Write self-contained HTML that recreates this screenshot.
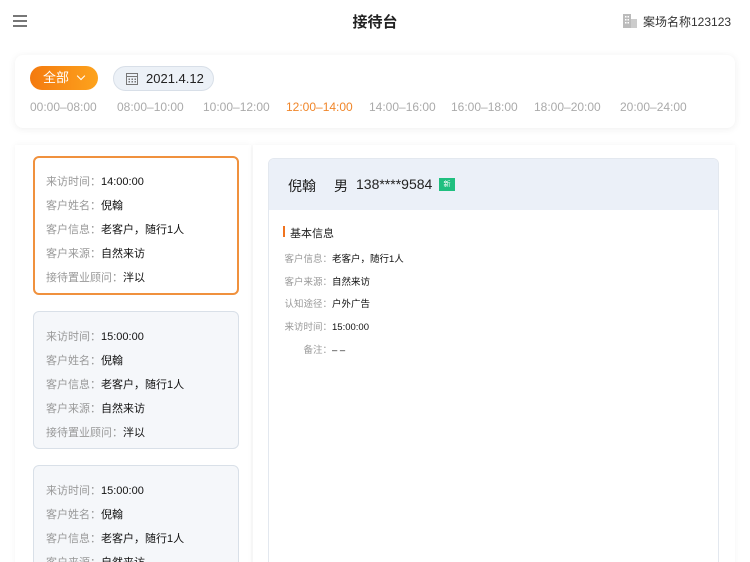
<!DOCTYPE html>
<html><head><meta charset="utf-8"><style>
*{margin:0;padding:0;box-sizing:border-box}
html,body{width:750px;height:562px;overflow:hidden}
body{background:#fff;font-family:"Liberation Sans","Noto Sans CJK SC",sans-serif;color:#333}
#w{position:relative;width:750px;height:562px;overflow:hidden}
.abs{position:absolute}
.filter{left:15px;top:55px;width:720px;height:73px;background:#fff;border-radius:8px;box-shadow:0 1px 8px rgba(0,0,0,0.07)}
.times span{position:absolute;top:100px;font-size:12px;color:#aaa;white-space:nowrap}
.card{position:absolute;left:33px;width:206px;border-radius:6px;padding:13px 0 0 12px;font-size:11px}
.card div{height:24px;line-height:24px;white-space:nowrap}
.card .l{color:#999}
.card .v{color:#111}
.rp{left:268px;top:158px;width:451px;height:420px;border:1px solid #e3e8ef;border-radius:6px;overflow:hidden}
.rh{height:51px;background:#ebf0f8;position:relative}
.info div{position:absolute;font-size:9.5px;white-space:nowrap}
.info .l{color:#999;text-align:right;width:48px;display:inline-block}
.info .v{color:#111}
</style></head><body><div id="w">
<div class="abs" style="left:13px;top:15px;width:14px">
<div style="height:1.5px;background:#777;margin-bottom:3.5px"></div><div style="height:1.5px;background:#777;margin-bottom:3.5px"></div><div style="height:1.5px;background:#777"></div></div>
<div class="abs" style="left:0;width:750px;top:11px;text-align:center;font-size:15px;font-weight:bold;color:#222">接待台</div>
<svg class="abs" style="left:623px;top:14px" width="14" height="14" viewBox="0 0 14 14"><rect x="0" y="0" width="8" height="14" fill="#bbb"/><rect x="8" y="5" width="6" height="9" fill="#ccc"/><g fill="#fff"><rect x="2" y="2" width="1.5" height="1.5"/><rect x="4.5" y="2" width="1.5" height="1.5"/><rect x="2" y="5" width="1.5" height="1.5"/><rect x="4.5" y="5" width="1.5" height="1.5"/><rect x="2" y="8" width="1.5" height="1.5"/><rect x="4.5" y="8" width="1.5" height="1.5"/></g></svg>
<div class="abs" style="left:643px;top:13px;font-size:12px;color:#333">案场名称123123</div>
<div class="abs filter"></div>
<div class="abs" style="left:30px;top:66px;width:68px;height:24px;border-radius:12px;background:linear-gradient(90deg,#f47a0f,#fda31d);color:#fff;font-size:13px;line-height:24px;padding-left:13px">全部 <span style="display:inline-block;width:6px;height:6px;border-right:1px solid #fff;border-bottom:1px solid #fff;transform:rotate(45deg);margin:0 0 3px 5px"></span></div>
<div class="abs" style="left:113px;top:66px;width:101px;height:25px;border-radius:13px;background:#ecf1f7;border:1px solid #d8dfe8;font-size:13px;line-height:23px;padding-left:32px;color:#222">2021.4.12</div>
<svg class="abs" style="left:126px;top:72px" width="12" height="13" viewBox="0 0 12 13"><rect x="0.5" y="1.5" width="11" height="11" fill="none" stroke="#777"/><line x1="0.5" y1="4.5" x2="11.5" y2="4.5" stroke="#777"/><g fill="#777"><rect x="2.5" y="6.5" width="1.5" height="1.5"/><rect x="5.5" y="6.5" width="1.5" height="1.5"/><rect x="8.5" y="6.5" width="1.5" height="1.5"/><rect x="2.5" y="9" width="1.5" height="1.5"/><rect x="5.5" y="9" width="1.5" height="1.5"/><rect x="8.5" y="9" width="1.5" height="1.5"/></g></svg>
<div class="times"><span style="left:30px">00:00–08:00</span><span style="left:117px">08:00–10:00</span><span style="left:203px">10:00–12:00</span><span style="left:286px;color:#f0862a">12:00–14:00</span><span style="left:369px">14:00–16:00</span><span style="left:451px">16:00–18:00</span><span style="left:534px">18:00–20:00</span><span style="left:620px">20:00–24:00</span></div>
<div class="abs" style="left:15px;top:145px;width:236px;height:420px;background:#fff;box-shadow:0 0 6px rgba(0,0,0,0.05)"></div>
<div class="abs" style="left:253px;top:145px;width:482px;height:420px;background:#fff;box-shadow:0 0 6px rgba(0,0,0,0.05)"></div>
<div class="card" style="top:156px;height:139px;border:2px solid #f0913d;padding-left:11px;padding-top:12px">
<div><span class="l">来访时间：</span><span class="v">14:00:00</span></div><div><span class="l">客户姓名：</span><span class="v">倪翰</span></div><div><span class="l">客户信息：</span><span class="v">老客户，随行1人</span></div><div><span class="l">客户来源：</span><span class="v">自然来访</span></div><div><span class="l">接待置业顾问：</span><span class="v">泮以</span></div></div>
<div class="card" style="top:311px;height:138px;border:1px solid #d9e0e8;background:#f5f7fa">
<div><span class="l">来访时间：</span><span class="v">15:00:00</span></div><div><span class="l">客户姓名：</span><span class="v">倪翰</span></div><div><span class="l">客户信息：</span><span class="v">老客户，随行1人</span></div><div><span class="l">客户来源：</span><span class="v">自然来访</span></div><div><span class="l">接待置业顾问：</span><span class="v">泮以</span></div></div>
<div class="card" style="top:465px;height:138px;border:1px solid #d9e0e8;background:#f5f7fa">
<div><span class="l">来访时间：</span><span class="v">15:00:00</span></div><div><span class="l">客户姓名：</span><span class="v">倪翰</span></div><div><span class="l">客户信息：</span><span class="v">老客户，随行1人</span></div><div><span class="l">客户来源：</span><span class="v">自然来访</span></div></div>
<div class="abs rp"><div class="rh">
<span class="abs" style="left:19px;top:17px;font-size:14px;color:#222">倪翰</span>
<span class="abs" style="left:65px;top:17px;font-size:14px;color:#222">男</span>
<span class="abs" style="left:87px;top:17px;font-size:14px;color:#222">138****9584</span>
<span class="abs" style="left:170px;top:19px;width:16px;height:13px;background:#1fbf7f;color:#fff;font-size:7px;line-height:13px;text-align:center">新</span></div></div>
<div class="abs" style="left:283px;top:226px;width:2px;height:11px;background:#f0731f"></div>
<div class="abs" style="left:290px;top:225px;font-size:11px;color:#222">基本信息</div>
<div class="info">
<div style="left:284px;top:251px"><span class="l">客户信息：</span><span class="v">老客户，随行1人</span></div>
<div style="left:284px;top:274px"><span class="l">客户来源：</span><span class="v">自然来访</span></div>
<div style="left:284px;top:296px"><span class="l">认知途径：</span><span class="v">户外广告</span></div>
<div style="left:284px;top:319px"><span class="l">来访时间：</span><span class="v">15:00:00</span></div>
<div style="left:284px;top:342px"><span class="l">备注：</span><span class="v">– –</span></div>
</div>
</div></body></html>
